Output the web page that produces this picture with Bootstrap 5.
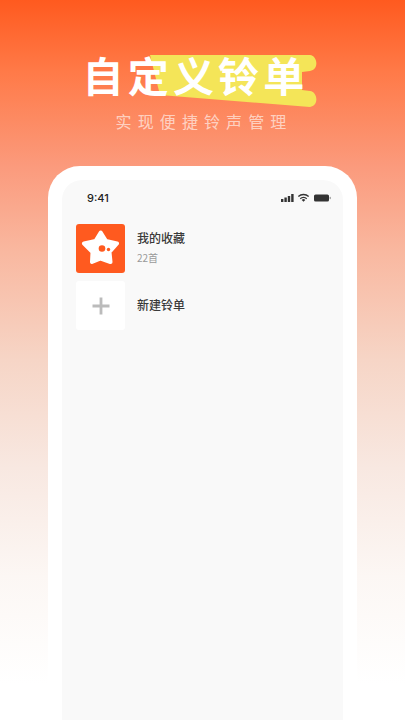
<!DOCTYPE html>
<html lang="zh">
<head>
<meta charset="utf-8">
<title>自定义铃单</title>
<link rel="stylesheet" href="https://cdn.jsdelivr.net/npm/bootstrap@5.3.0/dist/css/bootstrap.min.css">
<style>
html,body{height:720px;overflow:hidden;}
body{width:405px;background:linear-gradient(180deg,#ff5a1f 0%,#ff7a48 10%,#fb9a7c 23%,#f9b8a0 35%,#f6d5c6 50%,#f8e8e1 65%,#fcf7f4 80%,#ffffff 95%);font-family:"Noto Sans CJK SC","Liberation Sans",sans-serif;}
.hero-box{height:166px;padding-top:48px;}
.hero-title{position:relative;width:240px;margin:0 auto;height:52px;}
.hero-swash{position:absolute;left:47px;top:6px;width:190px;height:54px;}
.hero-text{position:relative;margin:0;padding-left:0;font-size:41px;line-height:52px;font-weight:700;letter-spacing:4.2px;color:#fff;white-space:nowrap;}
.hero-sub{margin:9px 0 0;padding-left:3px;font-size:16px;line-height:24px;letter-spacing:6.1px;color:rgba(255,255,255,.62);text-align:center;}
.phone-frame{margin:0 48px;height:554px;padding:14px 14px 0;background:#fff;border-radius:32px 32px 0 0;}
.phone-screen{height:100%;background:#f9f9f9;border-radius:20px 20px 0 0;padding:0 14px;}
.status-row{height:36px;padding:0 0 0 11px;}
.status-glyphs{margin-right:-4px;}
.status-time{font-family:Inter,"Liberation Sans",sans-serif;font-size:11px;font-weight:500;color:#222;}
.song-row{height:57px;gap:12px;}
.cover-tile{width:49px;height:49px;border-radius:3px;flex:none;}
.cover-orange{background:#ff5a1f;}
.cover-white{background:#fff;}
.song-name{font-size:12px;line-height:17px;font-weight:500;color:#3a3a3a;}
.song-list-text{margin-top:-3px;}
.song-count{font-size:10px;line-height:14px;color:#999;margin-top:5px;}
</style>
</head>
<body>
<div class="hero-box">
  <div class="hero-title">
    <svg class="hero-swash" viewBox="0 0 190 54" aria-hidden="true">
      <path fill="#f4e558" d="M20 1 L180 1 C188 2 189 16 180 17 L172 18 L172 36 L180 37 C188 38 189 52 180 53 L30 41 Z"/>
    </svg>
    <h1 class="hero-text">自定义铃单</h1>
  </div>
  <p class="hero-sub">实现便捷铃声管理</p>
</div>
<div class="phone-frame">
  <div class="phone-screen">
    <div class="status-row d-flex align-items-center justify-content-between mb-1">
      <span class="status-time">9:41</span>
      <svg class="status-glyphs" width="52" height="10" viewBox="0 0 52 10" aria-hidden="true">
        <g fill="#333">
          <rect x="0" y="6" width="2.4" height="3"/><rect x="3.4" y="4.5" width="2.4" height="4.5"/><rect x="6.8" y="3" width="2.4" height="6"/><rect x="10.2" y="1" width="2.4" height="8"/>
          <path d="M22.5 8.8l-1.8-1.9a2.5 2.5 0 0 1 3.6 0z"/>
          <path d="M18.8 5.2a5.2 5.2 0 0 1 7.4 0l-.9 1a3.9 3.9 0 0 0-5.6 0z"/>
          <path d="M16.9 3.1a8 8 0 0 1 11.2 0l-.9 1a6.7 6.7 0 0 0-9.4 0z"/>
          <rect x="33" y="1.5" width="15" height="7" rx="1.6"/>
          <rect x="48.6" y="3.8" width="1.2" height="2.4" rx=".6" opacity=".5"/>
        </g>
      </svg>
    </div>
    <div class="song-row d-flex align-items-center">
      <div class="cover-tile cover-orange">
        <svg class="d-block" width="49" height="49" viewBox="0 0 49 49" aria-hidden="true">
          <path fill="#fff" stroke="#fff" stroke-width="4" stroke-linejoin="round" d="M24.7 8.5 L30 17 L41 19.5 L33.5 28 L34.5 38 L24.7 34.5 L16 38 L16.5 28 L8 19.5 L19.5 17 Z"/>
          <circle cx="26" cy="24.5" r="3.3" fill="#ff5a1f"/>
          <circle cx="32.5" cy="25.5" r="1.7" fill="#ff5a1f"/>
        </svg>
      </div>
      <div class="song-list-text">
        <div class="song-name">我的收藏</div>
        <div class="song-count">22首</div>
      </div>
    </div>
    <div class="song-row d-flex align-items-center">
      <div class="cover-tile cover-white d-flex align-items-center justify-content-center">
        <svg width="20" height="20" viewBox="0 0 20 20" aria-hidden="true"><path stroke="#bbb" stroke-width="2.8" d="M10 1.5V18.5M1.5 10H18.5"/></svg>
      </div>
      <div class="song-name song-list-text">新建铃单</div>
    </div>
  </div>
</div>
<script src="https://cdn.jsdelivr.net/npm/bootstrap@5.3.0/dist/js/bootstrap.bundle.min.js"></script>
</body>
</html>
